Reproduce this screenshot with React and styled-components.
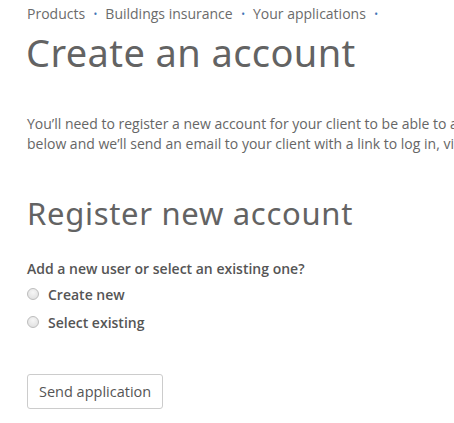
import React from "react";
import styled, { createGlobalStyle } from "styled-components";

const Global = createGlobalStyle`
  html, body { margin: 0; padding: 0; background: #fff; }
  body { font-family: "Open Sans", "Liberation Sans", sans-serif; color: #666; overflow: hidden; }
`;

const Page = styled.div`
  width: 454px;
  height: 423px;
  overflow: hidden;
  padding: 4px 0 0 27px;
  box-sizing: border-box;
  white-space: nowrap;
`;

const Crumbs = styled.nav`
  display: flex;
  align-items: center;
  font-size: 14px;
  line-height: 20px;
  color: #6b6b6b;
`;

const Crumb = styled.span`
  display: inline-flex;
  align-items: center;
  &::after {
    content: "•";
    color: #3f73b5;
    font-size: 10px;
    margin: 0 8px 0 8.5px;
  }
`;

const Title = styled.h1`
  margin: 6px 0 0 -1px;
  font-family: "Noto Sans", "Open Sans", sans-serif;
  font-weight: 400;
  font-size: 38px;
  line-height: 44px;
  color: #636363;
  letter-spacing: 0.4px;
`;

const Intro = styled.p`
  margin: 40px 0 0;
  font-size: 14px;
  line-height: 20px;
  color: #666;
`;

const SubTitle = styled.h2`
  margin: 41px 0 0;
  font-family: "Noto Sans", "Open Sans", sans-serif;
  font-weight: 400;
  font-size: 31px;
  line-height: 36px;
  color: #636363;
  letter-spacing: 0.7px;
`;

const Question = styled.div`
  margin-top: 28px;
  font-size: 14px;
  font-weight: 600;
  color: #555;
  line-height: 20px;
`;

const Options = styled.div`
  display: flex;
  flex-direction: column;
  gap: 8px;
  margin-top: 6px;
`;

const Option = styled.label`
  display: flex;
  align-items: center;
  gap: 9px;
  font-size: 14px;
  font-weight: 600;
  color: #555;
  line-height: 20px;
`;

const Radio = styled.span`
  width: 12px;
  height: 12px;
  box-sizing: border-box;
  border-radius: 50%;
  border: 1px solid #bcbcbc;
  background: radial-gradient(circle at 50% 35%, #f6f6f6, #dcdcdc);
  margin-top: -2px;
`;

const Button = styled.button`
  margin-top: 41px;
  height: 35px;
  padding: 0 11px;
  border: 1px solid #ccc;
  border-radius: 3px;
  background: #fff;
  font-family: "Open Sans", sans-serif;
  font-size: 14.5px;
  color: #555;
`;

export default function App() {
  return (
    <>
      <Global />
      <Page>
        <Crumbs>
          <Crumb>Products</Crumb>
          <Crumb>Buildings insurance</Crumb>
          <Crumb>Your applications</Crumb>
        </Crumbs>
        <Title>Create an account</Title>
        <Intro>
          You’ll need to register a new account for your client to be able to apply
          <br />
          below and we’ll send an email to your client with a link to log in, view
        </Intro>
        <SubTitle>Register new account</SubTitle>
        <Question>Add a new user or select an existing one?</Question>
        <Options>
          <Option><Radio />Create new</Option>
          <Option><Radio />Select existing</Option>
        </Options>
        <Button>Send application</Button>
      </Page>
    </>
  );
}
